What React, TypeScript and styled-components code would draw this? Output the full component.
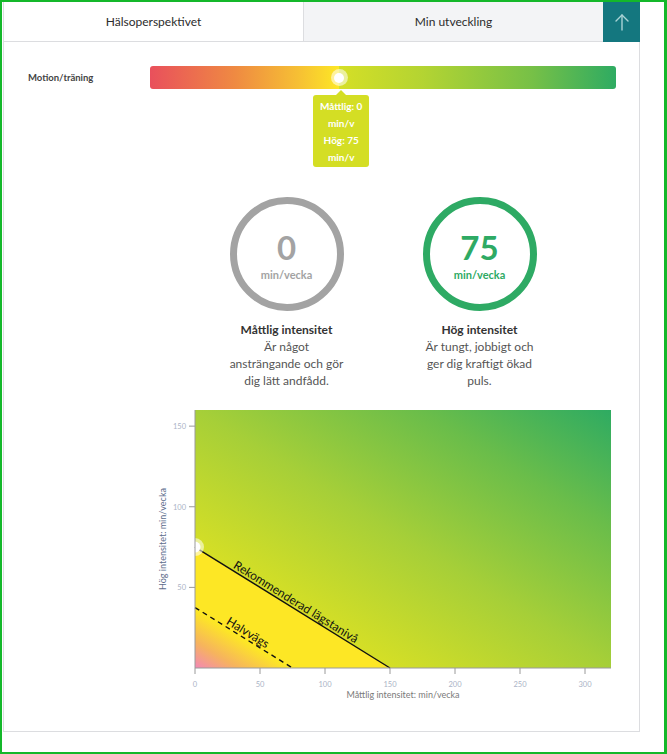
import styled, { createGlobalStyle } from 'styled-components';

const GlobalStyle = createGlobalStyle`
  html, body {
    margin: 0;
    padding: 0;
    background: #fff;
  }
  body {
    font-family: Lato, "Noto Sans", "Liberation Sans", sans-serif;
    color: #333;
  }
  * {
    box-sizing: border-box;
  }
`;

const Frame = styled.div`
  width: 667px;
  height: 754px;
  border: 2px solid #14b82a;
  border-right-width: 3px;
  overflow: hidden;
`;

const Card = styled.div`
  width: 637px;
  margin-left: 1px;
  border: 1px solid #dcdde0;
  border-top: none;
  padding-bottom: 25px;
`;

const Tabs = styled.div`
  display: flex;
  height: 40px;
  margin: 0 -1px 0 0;
  border-bottom: 1px solid #dcdde0;
`;

const Tab = styled.div<{ $active?: boolean }>`
  flex: ${p => (p.$active ? '0 0 299px' : '1')};
  display: flex;
  align-items: center;
  justify-content: center;
  font-size: 12px;
  color: #2c2c2c;
  background: ${p => (p.$active ? '#fff' : '#f3f4f6')};
  border-left: ${p => (p.$active ? 'none' : '1px solid #dcdde0')};
`;

const UpButton = styled.div`
  flex: 0 0 37px;
  margin-bottom: -1px;
  background: #14777f;
  display: flex;
  align-items: center;
  justify-content: center;
`;

const Body = styled.div`
  padding: 24px 23px 0 24px;
`;

const SliderRow = styled.div`
  display: grid;
  grid-template-columns: 122px 1fr;
  align-items: center;
`;

const Label = styled.div`
  font-size: 9.5px;
  font-weight: 700;
  color: #444;
`;

const Track = styled.div<{ $split: number }>`
  position: relative;
  height: 23px;
  border-radius: 3px;
  background: linear-gradient(
    to right,
    #e9505c 0%,
    #ef8a42 ${p => p.$split * 0.45}%,
    #f6bf34 ${p => p.$split * 0.78}%,
    #fde725 ${p => p.$split}%,
    #d5df26 ${p => p.$split}%,
    #b4d432 ${p => p.$split + (100 - p.$split) * 0.3}%,
    #76c047 ${p => p.$split + (100 - p.$split) * 0.7}%,
    #2eab62 100%
  );
`;

const Thumb = styled.div`
  position: absolute;
  top: 50%;
  width: 17px;
  height: 17px;
  margin: -8.5px 0 0 -8.5px;
  border-radius: 50%;
  background: rgba(255, 255, 255, 0.55);
  display: flex;
  align-items: center;
  justify-content: center;

  &::after {
    content: '';
    width: 10px;
    height: 10px;
    border-radius: 50%;
    background: #fff;
  }
`;

const Tooltip = styled.div`
  position: absolute;
  top: 29px;
  width: 56px;
  margin-left: -26px;
  padding: 3px 0 1px;
  border-radius: 3px;
  background: #d4de24;
  color: #fff;
  font-size: 10px;
  font-weight: 700;
  line-height: 17px;
  text-align: center;

  &::before {
    content: '';
    position: absolute;
    top: -5px;
    left: 50%;
    margin-left: -5px;
    border: 5px solid transparent;
    border-top: none;
    border-bottom-color: #d4de24;
  }
`;

const Content = styled.div`
  margin-left: 122px;
`;

const Circles = styled.div`
  display: flex;
  justify-content: center;
  gap: 77px;
  margin-top: 108px;
`;

const Stat = styled.div`
  width: 116px;
  display: flex;
  flex-direction: column;
  align-items: center;
  text-align: center;
`;

const Ring = styled.div<{ $color: string }>`
  width: 114px;
  height: 114px;
  border-radius: 50%;
  border: 7px solid ${p => p.$color};
  color: ${p => p.$color};
  display: flex;
  flex-direction: column;
  align-items: center;
  justify-content: center;
  padding-top: 2px;
`;

const Value = styled.div`
  font-size: 33px;
  font-weight: 700;
  line-height: 36px;
`;

const Unit = styled.div`
  margin-top: 3px;
  font-size: 11px;
  font-weight: 700;
  line-height: 13px;
`;

const StatTitle = styled.div`
  margin-top: 10px;
  font-size: 12px;
  font-weight: 700;
  line-height: 17px;
  color: #333;
`;

const StatText = styled.div`
  font-size: 12px;
  line-height: 17px;
  color: #555;
`;

const Chart = styled.svg`
  display: block;
  margin: 11px 0 0 5px;
  font-family: Lato, "Noto Sans", "Liberation Sans", sans-serif;
`;

const X0 = 40;
const Y0 = 268;
const SX = 1.3;
const SY = 258 / 160;
const px = (v: number) => X0 + v * SX;
const py = (v: number) => Y0 - v * SY;

const xTicks = [0, 50, 100, 150, 200, 250, 300];
const yTicks = [50, 100, 150];

// direction of moderate + 2*high in pixel space
const gx = 1 / SX;
const gy = 2 / SY;
const glen = Math.hypot(gx, gy);
const ux = gx / glen;
const uy = -gy / glen;

const ArrowUp = () => (
  <svg width="16" height="18" viewBox="0 0 16 18" fill="none" stroke="#a9d3d6" strokeWidth="1.4" strokeLinecap="round" strokeLinejoin="round">
    <path d="M8 17V2" />
    <path d="M2 8l6-6 6 6" />
  </svg>
);

const IntensityChart = () => {
  const sx = px(0);
  const sy = py(75);
  const topEnd = { x: sx + ux * (490 / glen), y: sy + uy * (490 / glen) };
  const lowEnd = { x: X0 + ux * (150 / glen), y: Y0 + uy * (150 / glen) };
  const angle = (Math.atan2(py(0) - py(75), px(150) - px(0)) * 180) / Math.PI;

  return (
    <Chart width="460" height="306" viewBox="0 0 460 306">
      <defs>
        <linearGradient id="above" gradientUnits="userSpaceOnUse" x1={sx} y1={sy} x2={topEnd.x} y2={topEnd.y}>
          <stop offset="0" stopColor="#d5df26" />
          <stop offset="0.35" stopColor="#a6cf38" />
          <stop offset="0.7" stopColor="#6abd4a" />
          <stop offset="1" stopColor="#2eab62" />
        </linearGradient>
        <linearGradient id="below" gradientUnits="userSpaceOnUse" x1={X0} y1={Y0} x2={lowEnd.x} y2={lowEnd.y}>
          <stop offset="0" stopColor="#f387b6" />
          <stop offset="0.22" stopColor="#f6b35e" />
          <stop offset="0.48" stopColor="#fde725" />
          <stop offset="1" stopColor="#fde725" />
        </linearGradient>
        <clipPath id="plot">
          <rect x={X0} y={10} width={416} height={258} />
        </clipPath>
      </defs>

      <rect x={X0} y={10} width={416} height={258} fill="url(#above)" />
      <polygon points={`${X0},${Y0} ${sx},${sy} ${px(150)},${Y0}`} fill="url(#below)" />

      <line x1={sx} y1={sy} x2={px(150)} y2={Y0} stroke="#111" strokeWidth="1.4" />
      <line x1={px(0)} y1={py(37.5)} x2={px(75)} y2={Y0} stroke="#111" strokeWidth="1.4" strokeDasharray="5 4" />

      <text transform={`translate(77.6 167.4) rotate(${angle})`} fontSize="12" fill="#111">
        Rekommenderad lägstanivå
      </text>
      <text transform={`translate(70.6 223.5) rotate(${angle})`} fontSize="12" fill="#111">
        Halvvägs
      </text>

      <g clipPath="url(#plot)">
        <circle cx={sx} cy={sy} r="9" fill="#fff" fillOpacity="0.55" />
        <circle cx={sx} cy={sy} r="5.5" fill="#fff" />
      </g>

      <line x1={X0} y1={10} x2={X0} y2={Y0} stroke="#9a9a9a" strokeWidth="1" />
      <line x1={X0} y1={Y0} x2={456} y2={Y0} stroke="#9a9a9a" strokeWidth="1" />

      {yTicks.map(t => (
        <g key={t}>
          <line x1={X0 - 6} y1={py(t)} x2={X0} y2={py(t)} stroke="#9a9a9a" />
          <text x={X0 - 9} y={py(t) + 3} fontSize="7.5" fill="#aab3c6" textAnchor="end">
            {t}
          </text>
        </g>
      ))}
      {xTicks.map(t => (
        <g key={t}>
          <line x1={px(t)} y1={Y0} x2={px(t)} y2={Y0 + 6} stroke="#9a9a9a" />
          <text x={px(t)} y={Y0 + 19} fontSize="7.5" fill="#aab3c6" textAnchor="middle">
            {t}
          </text>
        </g>
      ))}

      <text x={248} y={Y0 + 30} fontSize="9" fill="#7a7a7a" textAnchor="middle">
        Måttlig intensitet: min/vecka
      </text>
      <text transform={`translate(11 ${(10 + Y0) / 2}) rotate(-90)`} fontSize="9" fill="#5d6d8c" textAnchor="middle">
        Hög intensitet: min/vecka
      </text>
    </Chart>
  );
};

const App = () => {
  const split = 40.6;
  return (
    <Frame>
      <GlobalStyle />
      <Card>
        <Tabs>
          <Tab $active>Hälsoperspektivet</Tab>
          <Tab>Min utveckling</Tab>
          <UpButton>
            <ArrowUp />
          </UpButton>
        </Tabs>
        <Body>
          <SliderRow>
            <Label>Motion/träning</Label>
            <Track $split={split}>
              <Thumb style={{ left: `${split}%` }} />
              <Tooltip style={{ left: `${split}%` }}>
                Måttlig: 0 min/v
                <br />
                Hög: 75 min/v
              </Tooltip>
            </Track>
          </SliderRow>
          <Content>
            <Circles>
              <Stat>
                <Ring $color="#a3a3a3">
                  <Value>0</Value>
                  <Unit>min/vecka</Unit>
                </Ring>
                <StatTitle>Måttlig intensitet</StatTitle>
                <StatText>Är något ansträngande och gör dig lätt andfådd.</StatText>
              </Stat>
              <Stat>
                <Ring $color="#2eaa64">
                  <Value>75</Value>
                  <Unit>min/vecka</Unit>
                </Ring>
                <StatTitle>Hög intensitet</StatTitle>
                <StatText>Är tungt, jobbigt och ger dig kraftigt ökad puls.</StatText>
              </Stat>
            </Circles>
            <IntensityChart />
          </Content>
        </Body>
      </Card>
    </Frame>
  );
};

export default App;
